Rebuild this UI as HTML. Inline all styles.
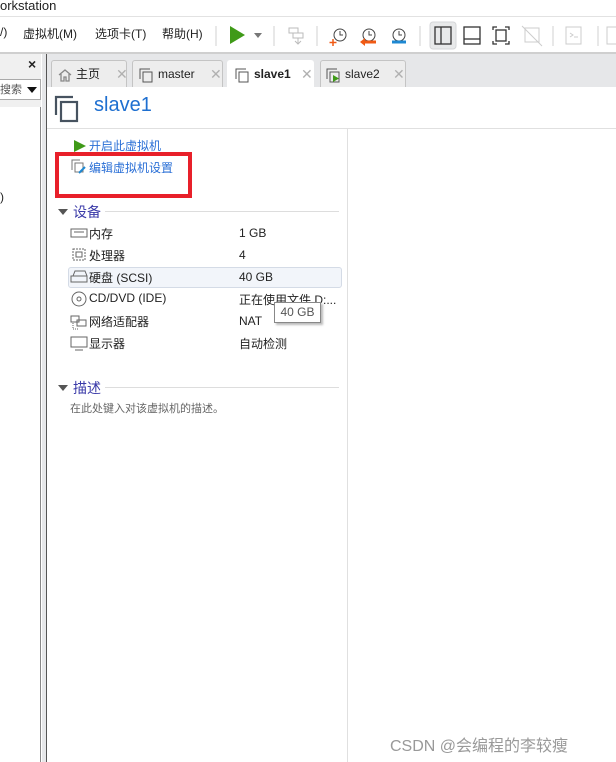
<!DOCTYPE html>
<html><head><meta charset="utf-8"><style>
*{margin:0;padding:0;box-sizing:border-box}
body{width:616px;height:762px;overflow:hidden;background:#fff;position:relative;font-family:"Liberation Sans","Noto Sans CJK SC",sans-serif;font-size:12px;color:#222}
.a{position:absolute}
.cn{font-family:"Liberation Sans","Noto Sans CJK SC",sans-serif}
.tab{position:absolute;top:60px;height:27px;border:1px solid #c4c4c4;border-bottom:none;border-radius:3px 3px 0 0;background:#ededed;font-size:12px;line-height:26px}
.x{position:absolute;color:#b0b0b0;font-size:14px;top:0}
.row{position:absolute;left:70px;font-size:12px}
</style></head><body>
<div class="a" style="left:0;top:0;width:616px;height:17px;background:#fff;border-bottom:1px solid #e2e2e2"></div>
<div class="a" style="left:0;top:-2px;font-size:13px">orkstation</div>
<div class="a" style="left:0;top:18px;width:616px;height:36px;background:#fff;border-bottom:2px solid #cfcfcf"></div>
<div class="a cn" style="left:0;top:25px;font-size:12px">/)</div>
<div class="a cn" style="left:23px;top:25px;font-size:12px">虚拟机(M)</div>
<div class="a cn" style="left:95px;top:25px;font-size:12px">选项卡(T)</div>
<div class="a cn" style="left:162px;top:25px;font-size:12px">帮助(H)</div>
<svg class="a" style="left:0;top:18px" width="616" height="34">
<g stroke="#d0d0d0"><line x1="216" y1="8" x2="216" y2="28"/><line x1="274" y1="8" x2="274" y2="28"/><line x1="317" y1="8" x2="317" y2="28"/><line x1="420" y1="8" x2="420" y2="28"/><line x1="553" y1="8" x2="553" y2="28"/><line x1="598" y1="8" x2="598" y2="28"/></g>
<polygon points="230,8 230,26 245,17" fill="#3f9a18"/>
<polygon points="254,15 262,15 258,20" fill="#777"/>
<g fill="none" stroke="#bbb"><rect x="289" y="10" width="9" height="5"/><rect x="293" y="15" width="10" height="5"/><path d="M298 20v6m-3-3l3 3 3-3"/></g>
<g fill="none" stroke="#444"><circle cx="340" cy="17" r="6"/><path d="M340 13v4h3"/><circle cx="369" cy="17" r="6"/><path d="M369 13v4h3"/><circle cx="399" cy="17" r="6"/><path d="M399 13v4h3"/></g>
<path d="M333 21v7m-3.5-3.5h7" stroke="#f05a14" stroke-width="1.5"/>
<path d="M362 24h14" stroke="#f05a14" stroke-width="3"/><polygon points="360,24 365,20 365,28" fill="#f05a14"/>
<path d="M392 24h14" stroke="#1e88d2" stroke-width="3"/>
<rect x="430" y="4" width="26" height="27" rx="3" fill="#e8e9ea" stroke="#d5d6d8"/>
<g fill="none" stroke="#333" stroke-width="1.3"><rect x="435" y="9" width="16" height="17"/><line x1="441" y1="9" x2="441" y2="26"/><rect x="464" y="9" width="16" height="17"/><line x1="464" y1="21" x2="480" y2="21"/><path d="M493 12v-3h4M509 12v-3h-4M493 23v3h4M509 23v3h-4"/><rect x="496" y="12" width="10" height="11"/></g>
<g fill="none" stroke="#ccc"><rect x="525" y="10" width="14" height="14"/><line x1="522" y1="8" x2="542" y2="28"/><rect x="566" y="9" width="15" height="17"/><path d="M570 15l3 2-3 2m4 0h4"/><rect x="607" y="9" width="12" height="17"/></g>
</svg>
<!-- left panel -->
<div class="a" style="left:0;top:54px;width:41px;height:708px;background:#f0f0f0"></div>
<div class="a" style="left:28px;top:56px;font-size:14px;font-weight:bold">×</div>
<div class="a" style="left:0;top:79px;width:41px;height:21px;background:#fff;border:1px solid #aaa;border-left:none"></div>
<div class="a cn" style="left:0;top:81px;font-size:11px;color:#555">搜索</div>
<svg class="a" style="left:26px;top:86px" width="12" height="8"><polygon points="1,1 11,1 6,7" fill="#111"/></svg>
<div class="a" style="left:0;top:107px;width:41px;height:655px;background:#fff;border-right:1px solid #888"></div>
<div class="a" style="left:0;top:190px;font-size:12px">)</div>
<div class="a" style="left:42px;top:54px;width:4px;height:708px;background:#e6e7e9"></div>
<div class="a" style="left:46px;top:54px;width:1px;height:708px;background:#555"></div>
<!-- tab strip -->
<div class="a" style="left:47px;top:54px;width:569px;height:33px;background:#e6e7e9"></div>
<div class="tab cn" style="left:51px;width:76px"><svg class="a" style="left:6px;top:7px" width="14" height="14" fill="none" stroke="#888" stroke-width="1.3"><path d="M1 7l6-5 6 5M3 6v7h3v-4h2v4h3V6"/></svg><span style="position:absolute;left:24px">主页</span><span class="x" style="left:64px">✕</span></div>
<div class="tab" style="left:132px;width:91px"><svg class="a" style="left:5px;top:6px" width="16" height="16" fill="none" stroke="#555"><path d="M2 12V2h10"/><rect x="5" y="5" width="9" height="10"/></svg><span style="position:absolute;left:25px">master</span><span class="x" style="left:77px">✕</span></div>
<div class="tab" style="left:227px;width:87px;background:#fff;border-color:#fff;height:28px"><svg class="a" style="left:6px;top:6px" width="16" height="16" fill="none" stroke="#555"><path d="M2 12V2h10"/><rect x="5" y="5" width="9" height="10"/></svg><span style="position:absolute;left:26px;font-weight:bold">slave1</span><span class="x" style="left:73px">✕</span></div>
<div class="tab" style="left:320px;width:86px"><svg class="a" style="left:4px;top:6px" width="16" height="16" fill="none" stroke="#555"><path d="M2 12V2h10"/><rect x="5" y="5" width="9" height="10"/><polygon points="8,8 8,15 14,11.5" fill="#3f9a18" stroke="none"/></svg><span style="position:absolute;left:24px">slave2</span><span class="x" style="left:72px">✕</span></div>
<!-- header -->
<svg class="a" style="left:54px;top:94px" width="28" height="30" fill="none" stroke="#475360" stroke-width="2.2"><path d="M2 21V3h17"/><rect x="7" y="8" width="16" height="19"/></svg>
<div class="a" style="left:94px;top:94px;font-size:20px;color:#1e6fd0">slave1</div>
<div class="a" style="left:47px;top:128px;width:569px;height:1px;background:#e0e0e0"></div>
<div class="a" style="left:347px;top:129px;width:1px;height:633px;background:#e0e0e0"></div>
<!-- actions -->
<svg class="a" style="left:73px;top:139px" width="14" height="14"><polygon points="1,1 1,13 13,7" fill="#3f9a18"/></svg>
<div class="a cn" style="left:89px;top:137px;color:#2a6fd6">开启此虚拟机</div>
<svg class="a" style="left:71px;top:159px" width="18" height="16" fill="none" stroke="#777"><path d="M1 11V1h8"/><rect x="4" y="4" width="8" height="9"/><path d="M8 14l6-6" stroke="#1e88d2" stroke-width="2"/></svg>
<div class="a cn" style="left:89px;top:159px;color:#2a6fd6">编辑虚拟机设置</div>
<div class="a" style="left:55px;top:152px;width:137px;height:46px;border:4px solid #e8202a"></div>
<!-- devices -->
<svg class="a" style="left:58px;top:208px" width="10" height="8"><polygon points="0,1 10,1 5,7" fill="#555"/></svg>
<div class="a cn" style="left:73px;top:202px;font-size:14px;color:#3a3aa8">设备</div>
<div class="a" style="left:105px;top:211px;width:234px;height:1px;background:#ddd"></div>
<div class="a" style="left:68px;top:267px;width:274px;height:21px;background:#f2f5fa;border:1px solid #d4dbe6;border-radius:3px"></div>
<svg class="a" style="left:70px;top:226px" width="20" height="130" fill="none" stroke="#666">
<rect x="1" y="3" width="16" height="8"/><path d="M4 6h10"/>
<rect x="3" y="23" width="12" height="11" stroke-dasharray="2 1"/><rect x="6" y="26" width="6" height="5"/>
<path d="M3 50l2-5h10l2 5v6H1v-6z"/><path d="M1 50h16"/>
<circle cx="9" cy="73" r="7"/><circle cx="9" cy="73" r="2"/>
<rect x="1" y="90" width="8" height="6"/><rect x="7" y="94" width="9" height="6"/><path d="M3 97v6h6" stroke-dasharray="1 1"/>
<rect x="1" y="111" width="16" height="10"/><path d="M5 124h8"/>
</svg>
<div class="row cn" style="left:89px;top:225px">内存</div><div class="row" style="left:239px;top:226px">1 GB</div>
<div class="row cn" style="left:89px;top:247px">处理器</div><div class="row" style="left:239px;top:248px">4</div>
<div class="row cn" style="left:89px;top:269px">硬盘 (SCSI)</div><div class="row" style="left:239px;top:270px">40 GB</div>
<div class="row cn" style="left:89px;top:291px">CD/DVD (IDE)</div><div class="row cn" style="left:239px;top:291px">正在使用文件 D:...</div>
<div class="row cn" style="left:89px;top:313px">网络适配器</div><div class="row" style="left:239px;top:314px">NAT</div>
<div class="row cn" style="left:89px;top:335px">显示器</div><div class="row cn" style="left:239px;top:335px">自动检测</div>
<div class="a" style="left:274px;top:302px;width:47px;height:21px;background:#fff;border:1px solid #888;box-shadow:2px 2px 2px #bbb;color:#555;font-size:12px;line-height:19px;text-align:center">40 GB</div>
<!-- description -->
<svg class="a" style="left:58px;top:384px" width="10" height="8"><polygon points="0,1 10,1 5,7" fill="#555"/></svg>
<div class="a cn" style="left:73px;top:378px;font-size:14px;color:#3a3aa8">描述</div>
<div class="a" style="left:105px;top:387px;width:234px;height:1px;background:#ddd"></div>
<div class="a cn" style="left:70px;top:400px;font-size:11px;color:#666">在此处键入对该虚拟机的描述。</div>
<div class="a cn" style="left:390px;top:732px;font-size:16px;color:#999">CSDN @会编程的李较瘦</div>
</body></html>
